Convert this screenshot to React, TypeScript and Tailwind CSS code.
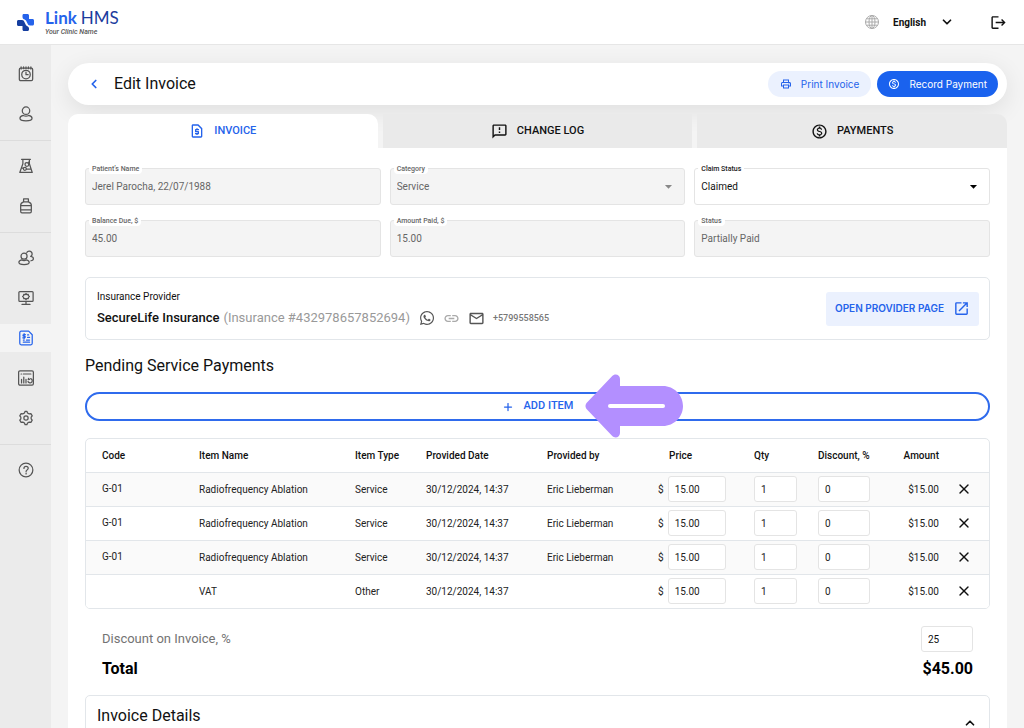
import React from 'react';
import {
  MdArrowDropDown,
  MdLink,
  MdLogout,
  MdMailOutline,
  MdOpenInNew,
  MdOutlineFeedback,
  MdOutlineLocalPrintshop,
  MdOutlineMonetizationOn,
  MdOutlineRequestPage,
} from 'react-icons/md';
import { FaWhatsapp } from 'react-icons/fa';
import { ChevronDown, ChevronLeft, ChevronUp, Plus, X } from 'lucide-react';

const NAV_GROUPS = [
  ['Appointments', 'Patients'],
  ['Laboratory', 'Pharmacy'],
  ['Staff', 'Workplace', 'Invoices', 'Reports', 'Settings'],
  ['Help'],
];

const NAV_ICONS: Record<string, React.ReactNode> = {
  Appointments: (
    <>
      <rect x="1.5" y="2.5" width="15" height="14" rx="1.5" />
      <path d="M3.500 1v2.500M6.300 1v2M9 1v2M11.700 1v2M14.500 1v2.500" />
      <circle cx="9" cy="9.600" r="4.800" />
      <path d="M9 7v2.800h2.400" />
    </>
  ),
  Patients: (
    <>
      <circle cx="9" cy="5.300" r="4.200" />
      <path d="M6 10.600c-2.300.600-3.800 1.800-3.800 3.200 0 1.800 2.800 2.900 6.800 2.900s6.800-1.100 6.800-2.900c0-1.400-1.500-2.600-3.800-3.200-1.800 1-4.200 1-6 0z" />
    </>
  ),
  Laboratory: (
    <>
      <path d="M4 1.500h10M5.500 1.500v5L2 16.300h14L12.800 6.500v-5M3.800 11.500h2.200M9.500 12.500h5" />
      <circle cx="10" cy="7.300" r="2.100" />
      <circle cx="7.700" cy="12.200" r="1.700" />
      <path d="M11.500 5.700l1.200-1.700" />
    </>
  ),
  Pharmacy: (
    <>
      <path d="M6.300 1h5.400v3.300H6.300zM6.300 4.300C4 5.200 3 6.300 3 8v7c0 1 .600 1.800 1.500 1.800h9c.900 0 1.500-.800 1.500-1.800V8c0-1.700-1-2.800-3.300-3.700M3 8.500h12M3 13.300h12" />
    </>
  ),
  Staff: (
    <>
      <circle cx="6.800" cy="7" r="3.400" />
      <path d="M4.200 11.200c-2 .500-3.200 1.500-3.200 2.700 0 1.600 2.300 2.600 5.800 2.600s5.800-1 5.800-2.600c0-1.200-1.200-2.200-3.200-2.700-1.500.900-3.700.900-5.200 0z" />
      <path d="M10 2.700a3.200 3.200 0 1 1 4.300 4.500c1.800.300 3 1.300 3 2.600 0 1.200-1.100 2-2.800 2.300" />
    </>
  ),
  Workplace: (
    <>
      <rect x="1" y="1.800" width="16" height="11" rx="1" />
      <path d="M9 12.800v3.200M4.500 16.200h9" />
      <path d="M9 4l1 1.100 1.500-.200.200 1.500L12.800 7.300l-1.100 1 -.200 1.500-1.500-.200L9 10.700l-1-1.100-1.500.200-.200-1.500-1.100-1 1.100-.900.200-1.500 1.500.200z" />
    </>
  ),
  Invoices: (
    <>
      <path d="M2 3c0-.900.600-1.700 1.500-1.700h8.500L16 5.300V15c0 .900-.600 1.700-1.500 1.700h-11C2.600 16.700 2 15.900 2 15zM6 13.700h7M6 11.300h1M9.500 11.300H13M10.800 8.300H13M10.800 5.600h1.200" />
      <path d="M8.300 5.200H6.600c-1.300 0-1.300 1.800 0 1.800h.600c1.300 0 1.300 1.800 0 1.800H5.400M6.900 4.200v5.600" />
    </>
  ),
  Reports: (
    <>
      <rect x=".7" y="1" width="16.600" height="16" rx="1.500" />
      <path d="M3.500 4.500h.500M6 4.500h8.500M4 10.500v4M6.500 8v6.500M9 10.500v4" />
      <path d="M12 9.300l-.500 1.500 1.500-.300M14.300 9.600a2.500 2.500 0 1 1-3 3.500" />
    </>
  ),
  Settings: (
    <>
      <path d="M7.300 3.300 8 1.500h2l.700 1.800 1.900 1.100 1.900-.300 1.500 2.500-1.200 1.500v1.800l1.200 1.500-1.500 2.500-1.900-.300-1.900 1.100L10 16.500H8l-.700-1.800-1.900-1.100-1.900.300L2 11.400l1.200-1.500V8.100L2 6.600l1.500-2.500 1.900.300z" />
      <circle cx="9" cy="9" r="2.400" />
    </>
  ),
  Help: (
    <>
      <circle cx="9" cy="9" r="7.700" />
      <path d="M6.700 7.200C6.700 4 11.500 4.200 11.500 7c0 1.800-2.400 1.900-2.400 3.800M9.100 12.600v.800" />
    </>
  ),
};

const ITEMS = [
  { code: 'G-01', name: 'Radiofrequency Ablation', type: 'Service', by: 'Eric Lieberman' },
  { code: 'G-01', name: 'Radiofrequency Ablation', type: 'Service', by: 'Eric Lieberman' },
  { code: 'G-01', name: 'Radiofrequency Ablation', type: 'Service', by: 'Eric Lieberman' },
  { code: '', name: 'VAT', type: 'Other', by: '' },
];

const Header: React.FC = () => (
  <header className="h-[45px] shrink-0 bg-white border-b border-[#e6e6e6] flex items-center justify-between pl-4 pr-[17px]">
    <a href="#" className="flex items-center gap-[10px]">
      <svg width="19" height="19" viewBox="0 0 19 19" aria-hidden="true">
        <path d="M6.500 2.500C6.500 1.400 7.200 1 8 1h3.500c.800 0 1.500.600 1.500 1.500V6h3.500c.900 0 1.500.600 1.500 1.500V11c0 .900-.600 1.500-1.500 1.500H14C12.500 12.500 12 11.500 11.500 10.500L10 7.500C9.500 6.500 6.500 6.500 6.500 4z" fill="#2563eb" />
        <path d="M2.500 7H6c1.400 0 1.800.700 2.300 1.800l1.700 3.400c.500 1 3 1 3 3.200V16.500c0 .900-.600 1.500-1.500 1.500H8c-.900 0-1.500-.600-1.500-1.500V13h-4C1.600 13 1 12.400 1 11.500v-3C1 7.600 1.600 7 2.500 7z" fill="#153e9f" />
      </svg>
      <span className="flex flex-col pb-[2px]">
        <span className="font-[Lato] text-[17px] leading-[21px] text-[#1b3c9e]">
          <b className="text-[#2563eb] font-bold">Link</b>
          <span className="ml-1">HMS</span>
        </span>
        <span className="text-[7px] leading-[8px] font-medium italic text-[#555]">Your Clinic Name</span>
      </span>
    </a>
    <div className="flex items-center">
      <svg width="14" height="14" viewBox="0 0 14 14" fill="none" stroke="#aaa" aria-hidden="true">
        <circle cx="7" cy="7" r="6.500" />
        <ellipse cx="7" cy="7" rx="3" ry="6.500" />
        <path d="M7 .5v13M.5 7h13M1.500 3.800h11M1.500 10.200h11" />
      </svg>
      <button type="button" className="ml-[14px] flex items-center gap-[14px] text-[10px] font-bold text-[#111]">
        English
        <ChevronDown size={14} strokeWidth={3} />
      </button>
      <button type="button" aria-label="Log out" className="ml-9">
        <MdLogout size={17} />
      </button>
    </div>
  </header>
);

const Sidebar: React.FC = () => (
  <nav className="w-[51px] shrink-0 bg-[#ebebeb] pt-1">
    {NAV_GROUPS.map((group, i) => (
      <div key={i} className="flex flex-col gap-3 pt-[11px] pb-3 border-b border-[#dcdcdc] last:border-0">
        {group.map((name) => (
          <a
            key={name}
            href="#"
            aria-label={name}
            className={`h-7 flex items-center justify-center ${name === 'Invoices' ? 'bg-[#f4f4f4] text-[#2563eb]' : 'text-[#555]'}`}
          >
            <svg width="16" height="16" viewBox="0 0 18 18" fill="none" stroke="currentColor" strokeWidth="1.400" strokeLinecap="round" strokeLinejoin="round">
              {NAV_ICONS[name]}
            </svg>
          </a>
        ))}
      </div>
    ))}
  </nav>
);

type FieldProps = { id: string; label: string; value: string; select?: boolean; active?: boolean };

const Field: React.FC<FieldProps> = ({ id, label, value, select, active }) => {
  const box = `block w-full h-[37px] rounded-[3px] border border-[#e4e4e4] px-[6px] text-[10px] appearance-none opacity-100 ${
    active ? 'bg-white text-[#111]' : 'bg-[#f4f4f4] text-[#666]'
  }`;
  return (
    <div className="relative">
      {select ? (
        <select id={id} className={box} disabled={!active}>
          <option>{value}</option>
        </select>
      ) : (
        <input id={id} className={box} defaultValue={value} disabled />
      )}
      <label
        htmlFor={id}
        className={`absolute left-1 -top-[3px] px-[3px] rounded-sm bg-white text-[7px] leading-[9px] font-medium ${active ? 'text-[#222]' : 'text-[#666]'}`}
      >
        {label}
      </label>
      {select && (
        <MdArrowDropDown
          size={17}
          className={`absolute right-2 top-[10px] pointer-events-none ${active ? 'text-black' : 'text-[#888]'}`}
        />
      )}
    </div>
  );
};

const Tabs: React.FC = () => {
  const tab = 'h-[34px] flex items-center justify-center gap-[9px] text-[11px] font-medium';
  return (
    <div role="tablist" className="mt-[9px] grid grid-cols-3 gap-[5px]">
      <button type="button" role="tab" aria-selected="true" className={`${tab} bg-white text-[#2563eb] rounded-t-[10px]`}>
        <MdOutlineRequestPage size={16} />
        INVOICE
      </button>
      <button type="button" role="tab" aria-selected="false" className={`${tab} bg-[#eaeaea] text-[#111]`}>
        <MdOutlineFeedback size={17} />
        CHANGE LOG
      </button>
      <button type="button" role="tab" aria-selected="false" className={`${tab} bg-[#eaeaea] text-[#111] rounded-tr-[10px]`}>
        <MdOutlineMonetizationOn size={17} />
        PAYMENTS
      </button>
    </div>
  );
};

const ItemsTable: React.FC = () => {
  const input = 'h-[26px] rounded-[3px] border border-[#e4e4e4] bg-white px-[6px] text-[10px]';
  return (
    <div className="mt-[17px] rounded-[5px] border border-[#e2e6ea] overflow-hidden">
      <table className="w-full table-fixed text-left text-[10px] text-[#222]">
        <colgroup>
          <col className="w-[113px]" />
          <col className="w-[156px]" />
          <col className="w-[71px]" />
          <col className="w-[121px]" />
          <col className="w-[111px]" />
          <col className="w-[96px]" />
          <col className="w-[64px]" />
          <col className="w-[64px]" />
          <col className="w-[57px]" />
          <col className="w-[50px]" />
        </colgroup>
        <thead>
          <tr className="h-[33px] whitespace-nowrap [&>th]:font-medium text-[#111]">
            <th className="pl-4">Code</th>
            <th>Item Name</th>
            <th>Item Type</th>
            <th>Provided Date</th>
            <th>Provided by</th>
            <th className="pl-[11px]">Price</th>
            <th>Qty</th>
            <th>Discount, %</th>
            <th className="text-right">Amount</th>
            <th aria-label="Remove"></th>
          </tr>
        </thead>
        <tbody>
          {ITEMS.map((item, i) => (
            <tr key={i} className="h-[34px] border-t border-[#e2e6ea] odd:bg-[#fafafa] last:bg-white">
              <td className="pl-4 pb-[2px]">{item.code}</td>
              <td>{item.name}</td>
              <td>{item.type}</td>
              <td>30/12/2024, 14:37</td>
              <td>{item.by}</td>
              <td>
                <span className="flex items-center gap-1">
                  $
                  <input aria-label="Price" className={`${input} w-[58px]`} defaultValue="15.00" />
                </span>
              </td>
              <td>
                <input aria-label="Quantity" className={`${input} block w-[43px]`} defaultValue="1" />
              </td>
              <td>
                <input aria-label="Discount, %" className={`${input} block w-[52px]`} defaultValue="0" />
              </td>
              <td className="text-right">$15.00</td>
              <td>
                <button type="button" aria-label="Remove item" className="ml-[17px] block">
                  <X size={16} strokeWidth={2} className="text-[#111]" />
                </button>
              </td>
            </tr>
          ))}
        </tbody>
      </table>
    </div>
  );
};

const App: React.FC = () => {
  return (
    <div className="h-screen flex flex-col overflow-hidden bg-[#f4f4f4] font-[Roboto,sans-serif] text-[#111]">
      <Header />
      <div className="flex-1 min-h-0 flex">
        <Sidebar />
        <main className="flex-1 min-w-0 px-[17px] pt-[18px] overflow-hidden">
          <div className="h-[42px] rounded-full bg-white shadow-[0_6px_24px_rgba(0,0,0,0.09)] flex items-center pl-[19px] pr-[9px]">
            <button type="button" aria-label="Back" className="text-[#2563eb]">
              <ChevronLeft size={14} strokeWidth={3} />
            </button>
            <h1 className="ml-[13px] text-[16px] flex-1">Edit Invoice</h1>
            <div className="flex gap-[6px] font-[Inter,sans-serif] text-[10px]">
              <button type="button" className="h-[26px] rounded-full bg-[#ebf1fe] text-[#2563eb] flex items-center gap-[9px] px-3">
                <MdOutlineLocalPrintshop size={12} />
                Print Invoice
              </button>
              <button type="button" className="h-[26px] rounded-full bg-[#1a62ee] text-white flex items-center gap-[9px] px-[11px]">
                <MdOutlineMonetizationOn size={12} />
                Record Payment
              </button>
            </div>
          </div>

          <Tabs />

          <div className="bg-white px-[17px] pt-5">
            <div className="grid grid-cols-3 gap-x-[9px] gap-y-[15px]">
              <Field id="patient" label="Patient’s Name" value="Jerel Parocha, 22/07/1988" />
              <Field id="category" label="Category" value="Service" select />
              <Field id="claim" label="Claim Status" value="Claimed" select active />
              <Field id="balance" label="Balance Due, $" value="45.00" />
              <Field id="paid" label="Amount Paid, $" value="15.00" />
              <Field id="status" label="Status" value="Partially Paid" />
            </div>

            <section className="mt-5 h-[63px] rounded-[5px] border border-[#e2e6ea] flex items-center justify-between px-[11px]">
              <div className="pt-px">
                <p className="text-[10px] leading-3">Insurance Provider</p>
                <div className="mt-[6px] flex items-center gap-[9px] leading-[18px]">
                  <p className="flex gap-1 text-[13px] font-medium">
                    SecureLife Insurance
                    <span className="font-normal text-[#999]">(Insurance #432978657852694)</span>
                  </p>
                  <div className="flex items-center gap-2 text-[#555]">
                    <a href="#" aria-label="WhatsApp"><FaWhatsapp size={16} /></a>
                    <a href="#" aria-label="Copy link" className="text-[#aaa]"><MdLink size={17} /></a>
                    <a href="#" aria-label="Email"><MdMailOutline size={17} /></a>
                    <a href="#" className="text-[9px] font-medium text-[#777]">+5799558565</a>
                  </div>
                </div>
              </div>
              <a href="#" className="h-[34px] -mr-px rounded-[3px] bg-[#ebf1fe] px-[9px] flex items-center gap-[9px] font-[Inter,sans-serif] text-[10px] font-semibold text-[#2563eb]">
                OPEN PROVIDER PAGE
                <MdOpenInNew size={17} />
              </a>
            </section>

            <h2 className="mt-4 text-[16px] leading-5">Pending Service Payments</h2>
            <div className="relative mt-4">
              <button type="button" className="w-full h-[29px] rounded-full border-2 border-[#2f6bed] text-[#2563eb] text-[11px] font-medium flex items-center justify-center gap-[10px]">
                <Plus size={12} strokeWidth={2.5} />
                ADD ITEM
              </button>
              <svg className="absolute left-1/2 ml-[47px] -top-[18px] pointer-events-none" width="99" height="64" viewBox="0 0 99 64" aria-hidden="true">
                <path d="M2 28.500 27 2.200C30-1 35 .7 35 5v7h43c11 0 20 9 20 20s-9 20-20 20H35v7c0 4.300-5 6-8 2.800L2 35.500c-2-2-2-5 0-7z" fill="#b38fff" />
                <rect x="23" y="30" width="57" height="4" rx="2" fill="#fff" />
              </svg>
            </div>

            <ItemsTable />

            <div className="mt-[17px] px-[17px]">
              <div className="flex items-center justify-between">
                <label htmlFor="discount" className="text-[13px] text-[#737373]">Discount on Invoice, %</label>
                <input id="discount" className="w-[52px] h-[26px] rounded-[3px] border border-[#e4e4e4] px-[6px] text-[10px]" defaultValue="25" />
              </div>
              <div className="mt-[7px] flex justify-between text-[16px] leading-5 font-bold text-black">
                <span>Total</span>
                <span>$45.00</span>
              </div>
            </div>

            <section className="mt-4 h-[80px] rounded-[5px] border border-[#e2e6ea] px-[11px] pt-[10px]">
              <button type="button" className="w-full flex items-start justify-between">
                <span className="text-[16px] leading-5">Invoice Details</span>
                <ChevronUp size={14} strokeWidth={3} className="mt-[10px] mr-px" />
              </button>
            </section>
          </div>
        </main>
      </div>
    </div>
  );
};

export default App;
